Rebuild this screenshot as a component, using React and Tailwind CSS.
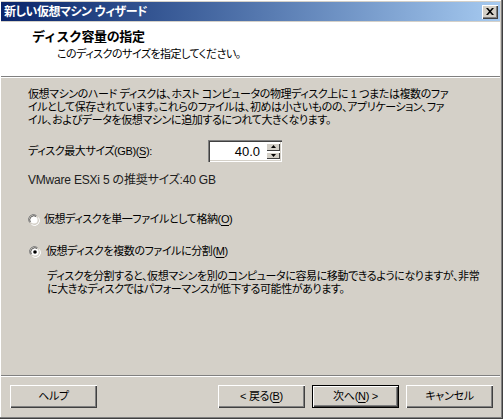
import React from "react";

const FONT = "font-['Liberation_Sans','Noto_Sans_CJK_JP',sans-serif] [font-feature-settings:'palt']";

function U({ children }) {
  return <span className="underline underline-offset-[2px]">{children}</span>;
}

function Btn({ children, def }) {
  return (
    <div
      className={
        "w-[87px] h-[23px] flex items-center justify-center text-[11px] tracking-[-0.3px] text-black bg-[#d4d0c8] " +
        (def
          ? "border border-black shadow-[inset_1px_1px_0_#ffffff,inset_-1px_-1px_0_#404040,inset_-2px_-2px_0_#808080]"
          : "shadow-[inset_1px_1px_0_#ffffff,inset_-1px_-1px_0_#404040,inset_-2px_-2px_0_#808080]")
      }
    >
      {children}
    </div>
  );
}

function Radio({ checked }) {
  return (
    <svg width="12" height="12" viewBox="0 0 12 12" className="shrink-0">
      <path d="M1.5 8.5 A5 5 0 0 1 8.5 1.5" stroke="#808080" strokeWidth="1" fill="none" />
      <path d="M2.5 8 A4 4 0 0 1 8 2.5" stroke="#404040" strokeWidth="1" fill="none" />
      <path d="M10.5 3.5 A5 5 0 0 1 3.5 10.5" stroke="#ffffff" strokeWidth="1" fill="none" />
      <path d="M9.5 4 A4 4 0 0 1 4 9.5" stroke="#d4d0c8" strokeWidth="1" fill="none" />
      <circle cx="6" cy="6" r="3.6" fill="#ffffff" />
      {checked && <circle cx="6" cy="6" r="1.8" fill="#000000" />}
    </svg>
  );
}

export default function App() {
  return (
    <div
      className={
        "w-[503px] h-[419px] bg-[#d4d0c8] flex flex-col pt-[2px] pl-[1px] pr-[3px] pb-[3px] text-black text-[11px] tracking-[-0.4px] leading-[13px] whitespace-nowrap " +
        "shadow-[inset_-1px_-1px_0_#404040,inset_-2px_-2px_0_#808080,inset_1px_1px_0_#ffffff] " +
        FONT
      }
    >
      {/* Title bar */}
      <div className="h-[19px] flex items-center justify-between pl-[3px] pr-[2px] bg-gradient-to-r from-[#0a246a] to-[#a6caf0]">
        <span className="text-white font-bold text-[12px] leading-[14px] tracking-[-0.5px]">新しい仮想マシン ウィザード</span>
        <div className="w-[16px] h-[14px] bg-[#d4d0c8] flex items-center justify-center shadow-[inset_1px_1px_0_#ffffff,inset_-1px_-1px_0_#404040,inset_-2px_-2px_0_#808080]">
          <svg width="8" height="7" viewBox="0 0 8 7">
            <path d="M0 0h2l2 2.2 2-2.2h2L5 3.5 8 7H6L4 4.8 2 7H0l3-3.5z" fill="#000" />
          </svg>
        </div>
      </div>

      {/* Header */}
      <div className="mt-[1px] bg-white h-[55px] border-b border-[#808080] flex flex-col">
        <div className="pl-[31px] pt-[8px] font-bold text-[13px] leading-[14px] tracking-[-0.4px] [font-feature-settings:normal]">ディスク容量の指定</div>
        <div className="pl-[56px] mt-[3px] leading-[14px] tracking-[-0.5px]">このディスクのサイズを指定してください。</div>
      </div>
      <div className="h-[1px] bg-white" />

      {/* Body */}
      <div className="flex-1 flex flex-col">
        <div className="pl-[27px] pt-[10px] leading-[13px]">
          仮想マシンのハード ディスクは、ホスト コンピュータの物理ディスク上に 1 つまたは複数のファ
          <br />
          イルとして保存されています。これらのファイルは、初めは小さいものの、アプリケーション、ファ
          <br />
          イル、およびデータを仮想マシンに追加するにつれて大きくなります。
        </div>

        <div className="pl-[27px] mt-[13px] flex items-center">
          <span className="w-[180px]">
            ディスク最大サイズ(GB)(<U>S</U>):
          </span>
          <div className="w-[74px] h-[22px] bg-white flex items-stretch p-[2px] shadow-[inset_1px_1px_0_#808080,inset_2px_2px_0_#404040,inset_-1px_-1px_0_#ffffff,inset_-2px_-2px_0_#d4d0c8]">
            <div className="flex-1 flex items-center justify-end pr-[6px] text-[13px] tracking-normal">40.0</div>
            <div className="w-[14px] flex flex-col gap-[1px] py-[1px]">
              <div className="flex-1 bg-[#d4d0c8] flex items-center justify-center shadow-[inset_1px_1px_0_#ffffff,inset_-1px_-1px_0_#404040]">
                <svg width="5" height="3" viewBox="0 0 5 3"><path d="M2.5 0L5 3H0z" fill="#000" /></svg>
              </div>
              <div className="flex-1 bg-[#d4d0c8] flex items-center justify-center shadow-[inset_1px_1px_0_#ffffff,inset_-1px_-1px_0_#404040]">
                <svg width="5" height="3" viewBox="0 0 5 3"><path d="M0 0h5L2.5 3z" fill="#000" /></svg>
              </div>
            </div>
          </div>
        </div>

        <div className="pl-[27px] mt-[12px] text-[12px] tracking-[-0.2px] text-[#202020]">VMware ESXi 5 の推奨サイズ:40 GB</div>

        <div className="pl-[27px] mt-[26px] flex items-center gap-[4px]">
          <Radio />
          <span>
            仮想ディスクを単一ファイルとして格納(<U>O</U>)
          </span>
        </div>

        <div className="pl-[28px] mt-[19px] flex items-center gap-[5px]">
          <Radio checked />
          <span>
            仮想ディスクを複数のファイルに分割(<U>M</U>)
          </span>
        </div>

        <div className="pl-[46px] mt-[12px] leading-[13px]">
          ディスクを分割すると、仮想マシンを別のコンピュータに容易に移動できるようになりますが、非常
          <br />
          に大きなディスクではパフォーマンスが低下する可能性があります。
        </div>

        <div className="mt-auto border-t border-[#808080]" />
        <div className="h-[1px] bg-white" />
        <div className="flex items-center pl-[9px] pr-[7px] pt-[8px] pb-[8px]">
          <Btn>ヘルプ</Btn>
          <div className="ml-auto flex gap-[7px]">
            <Btn>
              &lt; 戻る(<U>B</U>)
            </Btn>
            <Btn def>
              次へ(<U>N</U>) &gt;
            </Btn>
            <Btn>キャンセル</Btn>
          </div>
        </div>
      </div>
    </div>
  );
}
